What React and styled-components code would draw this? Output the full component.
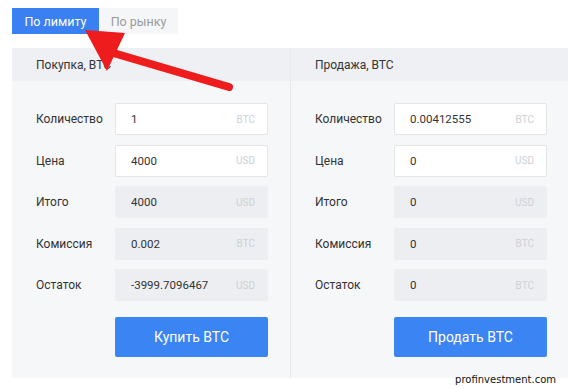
import React from 'react'
import styled, {createGlobalStyle} from 'styled-components'

const GlobalStyle = createGlobalStyle`
  html, body { margin:0; padding:0; background:#fff; }
  body { font-family: Roboto, "Liberation Sans", sans-serif; color:#333; }
`

const buy = [
  {label:'Количество', value:'1', unit:'BTC', editable:true},
  {label:'Цена', value:'4000', unit:'USD', editable:true},
  {label:'Итого', value:'4000', unit:'USD'},
  {label:'Комиссия', value:'0.002', unit:'BTC'},
  {label:'Остаток', value:'-3999.7096467', unit:'USD'},
]

const sell = [
  {label:'Количество', value:'0.00412555', unit:'BTC', editable:true},
  {label:'Цена', value:'0', unit:'USD', editable:true},
  {label:'Итого', value:'0', unit:'USD'},
  {label:'Комиссия', value:'0', unit:'BTC'},
  {label:'Остаток', value:'0', unit:'BTC'},
]

function Panel({title, rows, action, right}) {
  return (
    <Column $right={right}>
      <Head>{title}</Head>
      <Body>
        {rows.map(r => (
          <Row key={r.label}>
            <Label>{r.label}</Label>
            <Field $editable={r.editable}>
              <span>{r.value}</span>
              <Unit>{r.unit}</Unit>
            </Field>
          </Row>
        ))}
        <Row>
          <Label />
          <Button>{action}</Button>
        </Row>
      </Body>
    </Column>
  )
}

export default function App() {
  return (
    <Page>
      <GlobalStyle />
      <Tabs>
        <Tab $active>По лимиту</Tab>
        <Tab>По рынку</Tab>
      </Tabs>
      <Panels>
        <Panel title="Покупка, BTC" rows={buy} action="Купить BTC" />
        <Panel title="Продажа, BTC" rows={sell} action="Продать BTC" right />
      </Panels>

      {/* red pointer drawn over the tabs */}
      <Arrow width="568" height="389" viewBox="0 0 568 389">
        <line x1="110" y1="52" x2="229" y2="87" stroke="#ee1c1c" strokeWidth="8" strokeLinecap="round" />
        <polygon points="85,30 125,33 107,71" fill="#ee1c1c" />
      </Arrow>
      <Watermark>profinvestment.com</Watermark>
    </Page>
  )
}

const Page = styled.div`
  position:relative;
  width:568px;
  height:389px;
  overflow:hidden;
  padding:8px 0 0 12px;
  box-sizing:border-box;
`

const Tabs = styled.div`
  display:flex;
  height:26px;
`

const Tab = styled.div`
  display:flex;
  align-items:center;
  justify-content:center;
  width:${p => p.$active ? '87px' : '79px'};
  font-size:12.5px;
  background:${p => p.$active ? '#3a80f2' : '#f5f6f8'};
  color:${p => p.$active ? '#fff' : '#9a9a9a'};
`

const Panels = styled.div`
  display:grid;
  grid-template-columns:278px 278px;
  margin-top:14px;
`

const Column = styled.div`
  display:flex;
  flex-direction:column;
  border-left:${p => p.$right ? '1px solid #e6e8eb' : 'none'};
`

const Head = styled.div`
  height:33px;
  display:flex;
  align-items:center;
  padding-left:24px;
  background:#eef0f3;
  font-size:12px;
  color:#333;
`

const Body = styled.div`
  display:flex;
  flex-direction:column;
  gap:9.5px;
  padding:22px 0 21px 24px;
  background:#f6f7f9;
`

const Row = styled.div`
  display:flex;
  align-items:center;
`

const Label = styled.div`
  width:79px;
  flex:none;
  font-size:12px;
  color:#333;
`

const Field = styled.div`
  box-sizing:border-box;
  width:153px;
  height:32px;
  display:flex;
  align-items:center;
  justify-content:space-between;
  padding:0 12px 0 15px;
  border-radius:2px;
  background:${p => p.$editable ? '#fff' : '#eceef1'};
  border:1px solid ${p => p.$editable ? '#e3e5e8' : '#eceef1'};
  font-size:11.5px;
  color:#333;
`

const Unit = styled.span`
  font-size:10px;
  color:#cdd1d6;
`

const Button = styled.button`
  width:153px;
  height:40px;
  border:none;
  border-radius:2px;
  background:#3a84f4;
  color:#fff;
  font-family:Roboto, "Liberation Sans", sans-serif;
  font-size:14px;
  margin-top:6px;
  cursor:pointer;
`

const Arrow = styled.svg`
  position:absolute;
  left:0;
  top:0;
  pointer-events:none;
`

const Watermark = styled.div`
  position:absolute;
  right:12px;
  bottom:4px;
  font-family:"DejaVu Sans", sans-serif;
  font-size:10px;
  color:#111;
`
